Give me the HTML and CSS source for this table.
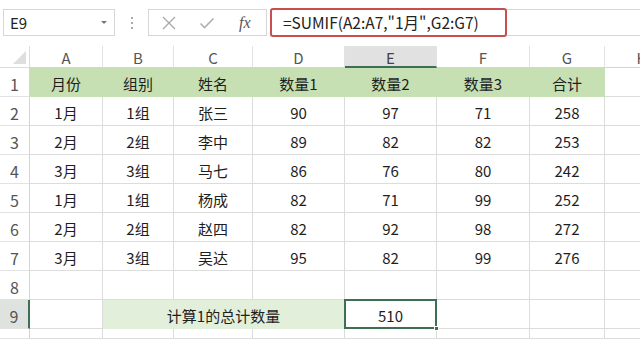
FILE: index.html
```html
<!DOCTYPE html>
<html lang="zh">
<head>
<meta charset="utf-8">
<link rel="stylesheet" href="styles.css">
</head>
<body>
<div class="app">
  <div class="toolbar">
    <div class="namebox"><span>E9</span><span class="caret"></span></div>
    <div class="dots"><i></i><i></i><i></i></div>
    <div class="btns">
      <svg class="ic" width="16" height="16" viewBox="0 0 16 16"><path d="M2 2L14 14M14 2L2 14" stroke="#a8a8a8" stroke-width="1.3" fill="none"/></svg>
      <svg class="ic" width="16" height="16" viewBox="0 0 16 16"><path d="M1.5 8.5L5.5 12.5L14.5 3.5" stroke="#b0b0b0" stroke-width="1.6" fill="none"/></svg>
      <span class="fx">fx</span>
    </div>
    <div class="formula-wrap">
      <div class="formula">=SUMIF(A2:A7,"1月",G2:G7)</div>
    </div>
  </div>
  <div class="sheet">
    <div class="corner"><span class="tri"></span></div>
    <div class="ch">A</div><div class="ch">B</div><div class="ch">C</div><div class="ch">D</div><div class="ch sel">E</div><div class="ch">F</div><div class="ch">G</div><div class="ch">H</div>

    <div class="rh">1</div>
    <div class="c hd">月份</div><div class="c hd">组别</div><div class="c hd">姓名</div><div class="c hd">数量1</div><div class="c hd">数量2</div><div class="c hd">数量3</div><div class="c hd">合计</div><div class="c"></div>

    <div class="rh">2</div>
    <div class="c">1月</div><div class="c">1组</div><div class="c">张三</div><div class="c">90</div><div class="c">97</div><div class="c">71</div><div class="c">258</div><div class="c"></div>

    <div class="rh">3</div>
    <div class="c">2月</div><div class="c">2组</div><div class="c">李中</div><div class="c">89</div><div class="c">82</div><div class="c">82</div><div class="c">253</div><div class="c"></div>

    <div class="rh">4</div>
    <div class="c">3月</div><div class="c">3组</div><div class="c">马七</div><div class="c">86</div><div class="c">76</div><div class="c">80</div><div class="c">242</div><div class="c"></div>

    <div class="rh">5</div>
    <div class="c">1月</div><div class="c">1组</div><div class="c">杨成</div><div class="c">82</div><div class="c">71</div><div class="c">99</div><div class="c">252</div><div class="c"></div>

    <div class="rh">6</div>
    <div class="c">2月</div><div class="c">2组</div><div class="c">赵四</div><div class="c">82</div><div class="c">92</div><div class="c">98</div><div class="c">272</div><div class="c"></div>

    <div class="rh">7</div>
    <div class="c">3月</div><div class="c">3组</div><div class="c">吴达</div><div class="c">95</div><div class="c">82</div><div class="c">99</div><div class="c">276</div><div class="c"></div>

    <div class="rh">8</div>
    <div class="c"></div><div class="c"></div><div class="c"></div><div class="c"></div><div class="c"></div><div class="c"></div><div class="c"></div><div class="c"></div>

    <div class="rh rsel">9</div>
    <div class="c"></div><div class="c merged">计算1的总计数量</div><div class="c active">510<span class="handle"></span></div><div class="c"></div><div class="c"></div><div class="c"></div>

    <div class="rh"></div>
    <div class="c"></div><div class="c"></div><div class="c"></div><div class="c"></div><div class="c"></div><div class="c"></div><div class="c"></div><div class="c"></div>
  </div>
</div>
</body>
</html>
```
FILE: styles.css
```css
* { box-sizing: border-box; }
html, body { margin: 0; padding: 0; background: #fff; }
body {
  width: 640px; height: 339px; overflow: hidden;
  font-family: "Noto Sans CJK SC", "Noto Sans", sans-serif;
  color: #222;
}
.app { width: 640px; height: 339px; overflow: hidden; }
.toolbar {
  height: 46px;
  display: flex;
  align-items: flex-start;
  padding: 8px 0 0 3px;
}
.namebox {
  width: 112px; height: 27px;
  margin-top: 1px;
  border: 1px solid #d6d6d6;
  display: flex; align-items: center; justify-content: space-between;
  padding: 0 7px 0 6px;
  font-size: 15px; color: #222;
}
.caret {
  width: 0; height: 0;
  border-left: 3px solid transparent; border-right: 3px solid transparent;
  border-top: 3px solid #777;
}
.dots {
  width: 33px; height: 27px; margin-top: 1px;
  display: flex; flex-direction: column; align-items: center; justify-content: center; gap: 3px;
}
.dots i { width: 2px; height: 2px; background: #aaa; display: block; }
.btns {
  width: 119px; height: 27px; margin-top: 1px;
  border: 1px solid #d6d6d6;
  display: flex; align-items: center;
  padding-left: 12px;
  gap: 22px;
}
.fx {
  font-family: "Liberation Serif", serif; font-style: italic;
  font-size: 16px; color: #555; margin-left: 2px;
}
.formula-wrap {
  flex: 1; height: 27px; margin-left: 3px; margin-top: 1px;
  border-top: 1px solid #d6d6d6; border-bottom: 1px solid #d6d6d6;
  display: flex;
}
.formula {
  width: 237px; height: 29px; margin-top: -2px;
  border: 2px solid #c64f50; border-radius: 3px;
  padding-left: 11px;
  font-size: 15.5px; line-height: 25px; color: #222;
}
.sheet {
  display: grid;
  grid-template-columns: 30px 73px 71px 79px 92px 92px 93px 75px 75px;
  grid-template-rows: 22px repeat(9, 29px) 10px;
  font-size: 15px;
}
.corner {
  border-right: 1px solid #dcdcdc; border-bottom: 1px solid #dcdcdc;
  position: relative;
}
.tri {
  position: absolute; right: 3px; bottom: 3px; width: 0; height: 0;
  border-left: 13px solid transparent; border-bottom: 13px solid #dedede;
}
.ch {
  border-right: 1px solid #e2e2e2; border-bottom: 1px solid #d4d4d4;
  text-align: center; font-size: 15px; line-height: 23px; color: #555;
}
.ch.sel { background: #e1e1e1; border-bottom: 2px solid #3f6e55; color: #444; }
.rh {
  border-right: 1px solid #d4d4d4; border-bottom: 1px solid #e2e2e2;
  font-size: 16px; color: #555; text-align: center;
  display: flex; align-items: flex-end; justify-content: center; padding-bottom: 0;
}
.rh.rsel { background: #dfe3e0; border-right: 2px solid #3f6e55; }
.c {
  border-right: 1px solid #dcdcdc; border-bottom: 1px solid #dcdcdc;
  display: flex; align-items: center; justify-content: center;
  padding-top: 2px;
  color: #1e1e1e;
}
.c.hd { background: #c6e0b4; border-color: #c6e0b4; }
.c.merged { grid-column: span 3; background: #e2efda; border-color: #e2efda; }
.c.active {
  border: 2px solid #3f6e55; position: relative;
  margin: -1px 0 0 -1px;
}
.handle {
  position: absolute; right: -4px; bottom: -4px;
  width: 5px; height: 5px; background: #3f6e55; border: 1px solid #fff;
}
```
